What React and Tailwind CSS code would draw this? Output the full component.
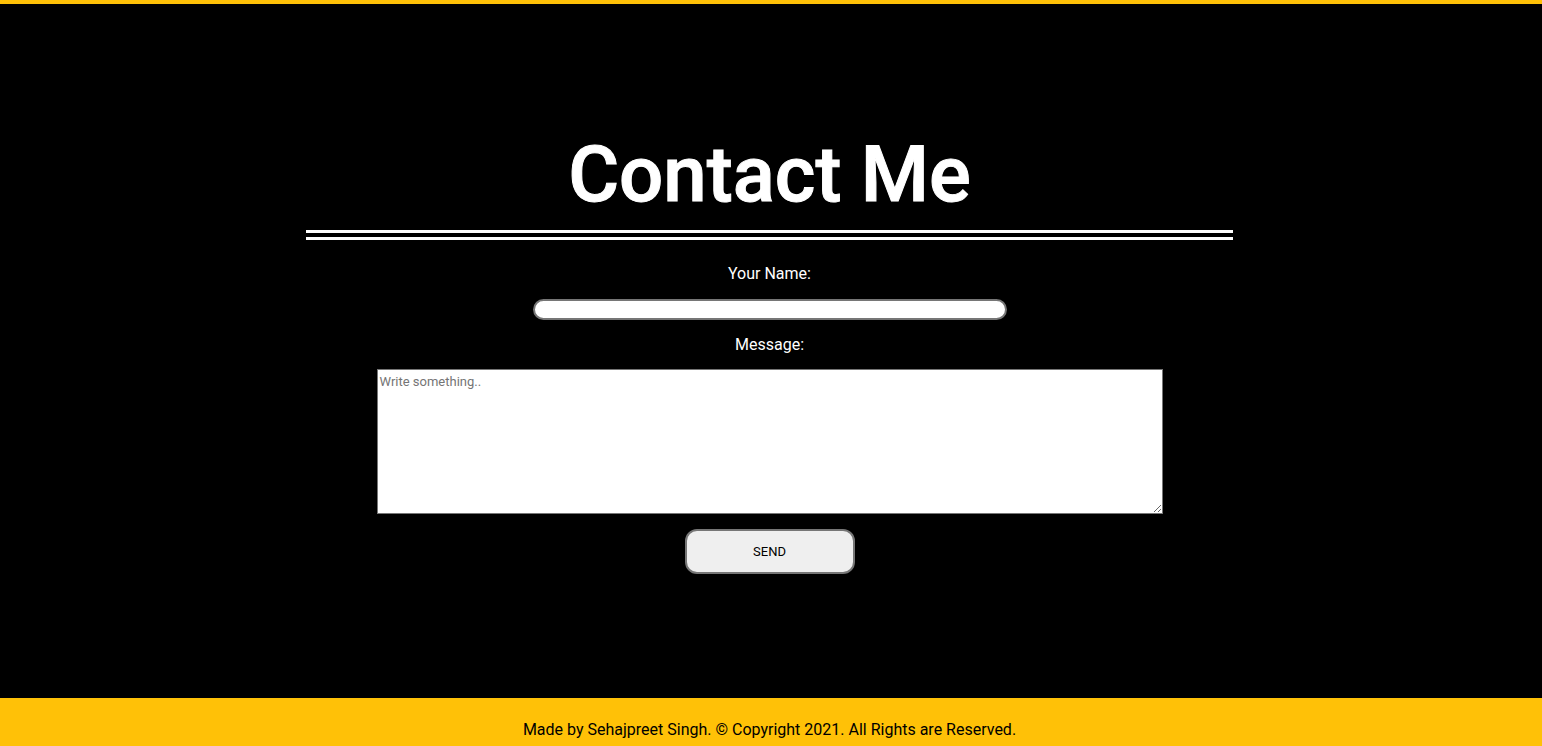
import React from 'react';

const App = () => {
  return (
    <div className="min-h-screen bg-black font-['Roboto',sans-serif] text-white">
      <div className="h-[4px] bg-[#ffc107]" />
      <main className="h-[694px] flex flex-col items-center pt-[132px] pr-[3px]">
        <h1 className="text-[78px] leading-none font-medium text-white [-webkit-text-stroke:1px_white]">Contact Me</h1>
        <div className="w-[927px] h-[10px] border-y-[3px] border-white mt-[16px]" />
        <form className="flex flex-col items-center" onSubmit={(e) => e.preventDefault()}>
          <label htmlFor="name" className="mt-[22px] text-base leading-6">Your Name:</label>
          <input
            id="name"
            type="text"
            className="mt-[13px] w-[474px] h-[21px] rounded-full border-2 border-[#767676] bg-white text-black px-2 text-sm outline-none"
          />
          <label htmlFor="msg" className="mt-[13px] text-base leading-6">Message:</label>
          <textarea
            id="msg"
            placeholder="Write something.."
            className="mt-[12px] w-[786px] h-[145px] border border-[#767676] bg-white text-black text-[13px] px-[2px] py-[2px] placeholder:text-[#757575] font-['Roboto',sans-serif] outline-none"
          />
          <button
            type="submit"
            className="mt-[15px] w-[170px] h-[45px] rounded-[12px] border-2 border-[#767676] bg-[#efefef] text-black text-[13px] pt-px"
          >
            SEND
          </button>
        </form>
      </main>
      <footer className="bg-[#ffc107] py-5 pr-[3px] text-center text-black text-base leading-6">
        Made by Sehajpreet Singh. © Copyright 2021. All Rights are Reserved.
      </footer>
    </div>
  );
};

export default App;
